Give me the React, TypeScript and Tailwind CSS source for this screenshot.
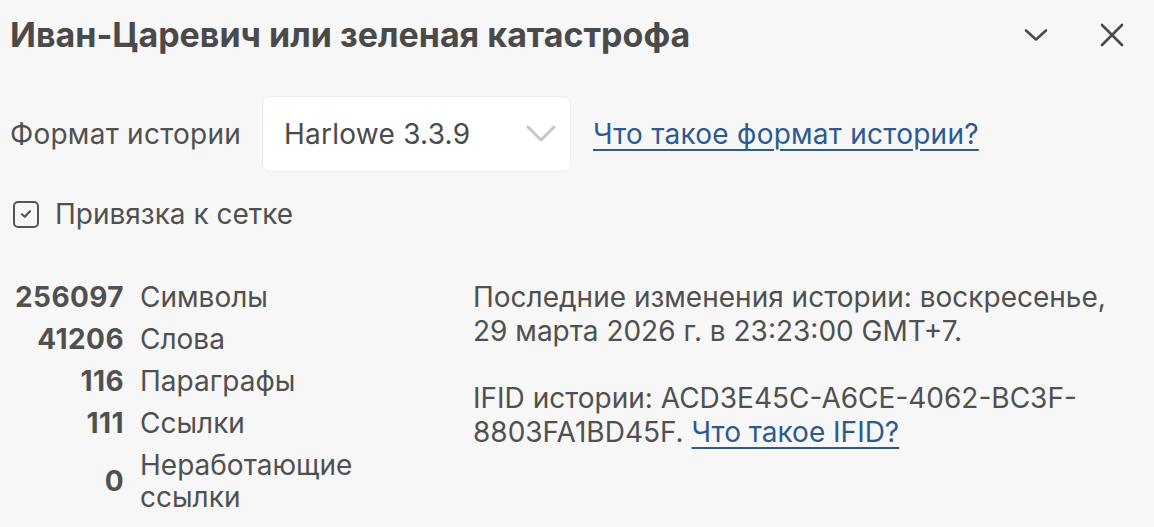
const stats = [
  { value: "256097", label: "Символы" },
  { value: "41206", label: "Слова" },
  { value: "116", label: "Параграфы" },
  { value: "111", label: "Ссылки" },
  { value: "0", label: "Неработающие ссылки" },
];

export default function App() {
  return (
    <div
      className="w-[1154px] h-[527px] overflow-hidden bg-[#f7f7f7] text-[#505050]"
      style={{ fontFamily: "Inter, 'Noto Sans', sans-serif" }}
    >
      {/* Header */}
      <div className="flex items-center h-[70px] pl-[10px] pr-[22px]">
        <h1 className="flex-1 text-[34px] leading-[40px] font-bold text-[#4a4a4a]">
          Иван-Царевич или зеленая катастрофа
        </h1>
        <button className="w-[40px] h-[40px] flex items-center justify-center">
          <svg width="24" height="14" viewBox="0 0 24 14" fill="none" stroke="#4a4a4a" strokeWidth="2.6" strokeLinecap="round" strokeLinejoin="round">
            <path d="M2 2.5l10 9 10-9" />
          </svg>
        </button>
        <button className="ml-[36px] w-[40px] h-[40px] flex items-center justify-center">
          <svg width="24" height="24" viewBox="0 0 24 24" fill="none" stroke="#4a4a4a" strokeWidth="2.6" strokeLinecap="round">
            <path d="M2 2l20 20M22 2L2 22" />
          </svg>
        </button>
      </div>

      {/* Story format */}
      <div className="flex items-center mt-[26px] pl-[10px] text-[28px] leading-[34px] tracking-[0.25px]">
        <span>Формат истории</span>
        <div className="ml-[21px] w-[309px] h-[76px] bg-white rounded-[8px] border border-[#ededed] flex items-center pl-[21px] pr-[14px]">
          <span className="flex-1 text-[#4a4a4a]">Harlowe 3.3.9</span>
          <svg width="30" height="18" viewBox="0 0 30 18" fill="none" stroke="#c6c6c6" strokeWidth="3" strokeLinecap="round" strokeLinejoin="round">
            <path d="M2 2l13 13L28 2" />
          </svg>
        </div>
        <a href="#" className="ml-[22px] text-[#2c5a93] underline underline-offset-[5px] decoration-[2px]">
          Что такое формат истории?
        </a>
      </div>

      {/* Snap to grid */}
      <div className="flex items-center mt-[26px] pl-[13px] text-[28px] leading-[32px]">
        <span className="w-[26px] h-[27px] border-[2.5px] border-[#555] rounded-[5px] flex items-center justify-center">
          <svg width="12" height="10" viewBox="0 0 12 10" fill="none" stroke="#555" strokeWidth="2.2" strokeLinecap="round" strokeLinejoin="round">
            <path d="M2 5.2l2.8 2.6L10 2.2" />
          </svg>
        </span>
        <span className="ml-[16px]">Привязка к сетке</span>
      </div>

      {/* Details */}
      <div className="flex mt-[51px] pl-[10px] text-[28px]">
        <div className="w-[463px] grid grid-cols-[114px_240px] gap-x-[16px] gap-y-[10px] content-start">
          {stats.map((s) => (
            <div key={s.label} className="contents">
              <span className="text-right font-bold self-center leading-[32px] tracking-[0.4px]">{s.value}</span>
              <span className="leading-[32px]">{s.label}</span>
            </div>
          ))}
        </div>
        <div className="w-[660px] leading-[34px] -mt-[1px]">
          <p>Последние изменения истории: воскресенье, 29 марта 2026 г. в 23:23:00 GMT+7.</p>
          <p className="mt-[33px]">
            IFID истории: ACD3E45C-A6CE-4062-BC3F-8803FA1BD45F.{" "}
            <a href="#" className="text-[#2c5a93] underline underline-offset-[5px] decoration-[2px]">Что такое IFID?</a>
          </p>
        </div>
      </div>
    </div>
  );
}
